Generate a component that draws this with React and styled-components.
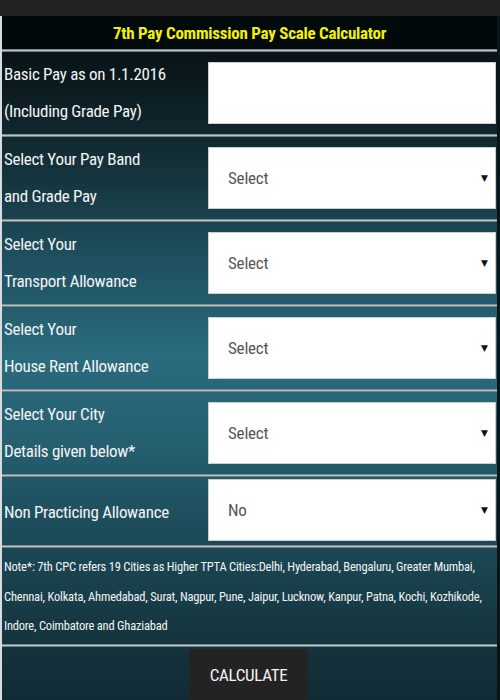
import styled, { createGlobalStyle } from 'styled-components';

const GlobalStyle = createGlobalStyle`
  html, body {
    margin: 0;
    padding: 0;
    background: #232323;
  }
  * {
    box-sizing: border-box;
  }
`;

const font = `"Liberation Sans Narrow", "Roboto Condensed", "Liberation Sans", Arial, sans-serif`;

const Page = styled.div`
  width: 500px;
  height: 700px;
  overflow: hidden;
  display: flex;
  flex-direction: column;
  font-family: ${font};
`;

const TopBar = styled.div`
  height: 16px;
  flex-shrink: 0;
  background: #232323;
`;

const Panel = styled.div`
  flex: 1;
  border-left: 2px solid #d8dcdd;
  border-right: 3px solid #08161b;
  background: linear-gradient(
    to bottom,
    #050d10 0px,
    #0b1a1f 70px,
    #143139 150px,
    #1f5261 250px,
    #2a6b7d 340px,
    #255f70 430px,
    #1b4856 530px,
    #15353f 620px,
    #112b35 684px
  );
`;

const Header = styled.div`
  height: 33px;
  background: #02090b;
  display: flex;
  align-items: center;
  justify-content: center;
`;

const Title = styled.h1`
  margin: 0;
  font-size: 17px;
  font-weight: 700;
  color: #f2f200;
  letter-spacing: -0.25px;
`;

const Divider = styled.div`
  height: 3px;
  background: linear-gradient(to bottom, #5e6e72 0, #b9c3c5 50%, #4f5f63 100%);
`;

const Row = styled.div`
  display: flex;
  align-items: ${p => (p.$top ? 'flex-start' : 'center')};
  height: ${p => p.$height || 82}px;
  padding-top: ${p => p.$padTop || 0}px;
`;

const Label = styled.div`
  width: 206px;
  flex-shrink: 0;
  padding-left: 2px;
  color: #f4f4f4;
  font-size: 17px;
  letter-spacing: -0.3px;
  line-height: 37px;
  align-self: center;
`;

const Field = styled.div`
  width: 288px;
  height: 62px;
  background: #ffffff;
  border: 1px solid #c9cfd1;
  display: flex;
  align-items: center;
  justify-content: space-between;
  padding: 0 7px 0 19px;
`;

const FieldText = styled.span`
  font-size: 17px;
  color: #555555;
  letter-spacing: -0.2px;
`;

const Arrow = styled.span`
  font-size: 9px;
  color: #111;
  font-family: "DejaVu Sans", sans-serif;
`;

const Note = styled.p`
  margin: 0;
  padding: 4px 2px 3px;
  color: #f4f4f4;
  font-size: 12.5px;
  letter-spacing: -0.2px;
  line-height: 29.5px;
`;

const ButtonRow = styled.div`
  display: flex;
  justify-content: center;
  padding-top: 2px;
`;

const Button = styled.button`
  width: 119px;
  height: 58px;
  margin-left: -2px;
  border: none;
  background: #232323;
  color: #f4f4f4;
  font-family: ${font};
  font-size: 17px;
  letter-spacing: -0.3px;
  padding: 0 0 6px;
`;

const rows = [
  { label: ['Select Your Pay Band', 'and Grade Pay'], value: 'Select' },
  { label: ['Select Your', 'Transport Allowance'], value: 'Select' },
  { label: ['Select Your', 'House Rent Allowance'], value: 'Select' },
  { label: ['Select Your City', 'Details given below*'], value: 'Select' },
];

const SelectField = ({ value }) => (
  <Field>
    <FieldText>{value}</FieldText>
    <Arrow>▼</Arrow>
  </Field>
);

const App = () => (
  <Page>
    <GlobalStyle />
    <TopBar />
    <Panel>
      <Header>
        <Title>7th Pay Commission Pay Scale Calculator</Title>
      </Header>
      <Divider />
      <Row>
        <Label>
          Basic Pay as on 1.1.2016
          <br />
          (Including Grade Pay)
        </Label>
        <Field />
      </Row>
      {rows.map(row => (
        <div key={row.label[0] + row.label[1]}>
          <Divider />
          <Row>
            <Label>
              {row.label[0]}
              <br />
              {row.label[1]}
            </Label>
            <SelectField value={row.value} />
          </Row>
        </div>
      ))}
      <Divider />
      <Row $height={68} $top $padTop={2}>
        <Label>Non Practicing Allowance</Label>
        <SelectField value="No" />
      </Row>
      <Divider />
      <Note>
        Note*: 7th CPC refers 19 Cities as Higher TPTA Cities:Delhi, Hyderabad, Bengaluru, Greater Mumbai,
        Chennai, Kolkata, Ahmedabad, Surat, Nagpur, Pune, Jaipur, Lucknow, Kanpur, Patna, Kochi, Kozhikode,
        Indore, Coimbatore and Ghaziabad
      </Note>
      <Divider />
      <ButtonRow>
        <Button>CALCULATE</Button>
      </ButtonRow>
    </Panel>
  </Page>
);

export default App;
